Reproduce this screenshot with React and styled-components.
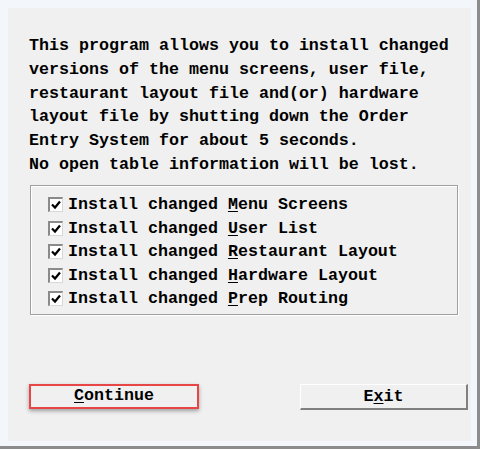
import React from 'react'
import styled, { createGlobalStyle } from 'styled-components'

const GlobalStyle = createGlobalStyle`
  html, body {
    margin: 0;
    padding: 0;
    background: #f3f6fb;
  }
  * { box-sizing: border-box; }
`

const items = [
  { key: 'M', rest: 'enu Screens' },
  { key: 'U', rest: 'ser List' },
  { key: 'R', rest: 'estaurant Layout' },
  { key: 'H', rest: 'ardware Layout' },
  { key: 'P', rest: 'rep Routing' },
]

function Check() {
  return (
    <Box>
      <svg width="10" height="10" viewBox="0 0 10 10">
        <path d="M1 4.5 L4 7.5 L9 1.5" stroke="#000" strokeWidth="2.2" fill="none" />
      </svg>
    </Box>
  )
}

function App() {
  return (
    <>
      <GlobalStyle />
      <Frame>
        <Panel>
          <Message>
            This program allows you to install changed{'\n'}
            versions of the menu screens, user file,{'\n'}
            restaurant layout file and(or) hardware{'\n'}
            layout file by shutting down the Order{'\n'}
            Entry System for about 5 seconds.{'\n'}
            No open table information will be lost.
          </Message>
          <Group>
            {items.map(it => (
              <Row key={it.key}>
                <Check />
                <span>Install changed <u>{it.key}</u>{it.rest}</span>
              </Row>
            ))}
          </Group>
          <Buttons>
            <Focus>
              <Btn><u>C</u>ontinue</Btn>
            </Focus>
            <ExitBtn>E<u>x</u>it</ExitBtn>
          </Buttons>
        </Panel>
      </Frame>
    </>
  )
}

export default App

const Frame = styled.div`
width: 480px;
height: 449px;
padding: 8px 0 0 8px;
border-right: 3px solid #8c8c8c;
border-bottom: 3px solid #8c8c8c;
background: #f3f6fb;
`
const Panel = styled.div`
width: 463px;
height: 433px;
background: #f0f0f0;
display: flex;
flex-direction: column;
padding: 26px 0 31px 21px;
font-family: "Liberation Mono", "DejaVu Sans Mono", monospace;
font-weight: bold;
font-size: 16.67px;
color: #000;
`
const Message = styled.div`
white-space: pre-line;
line-height: 23.8px;
`
const Group = styled.div`
margin: 8px 0 0 1px;
width: 428px;
height: 130px;
border: 1px solid #a0a0a0;
box-shadow: 1px 1px 0 #fff, inset 1px 1px 0 #fff;
padding: 7px 0 0 17px;
display: flex;
flex-direction: column;
`
const Row = styled.div`
display: flex;
align-items: center;
height: 23.6px;
gap: 5px;
u { text-underline-offset: 2px; }
`
const Box = styled.span`
width: 15px;
height: 15px;
flex: none;
display: flex;
align-items: center;
justify-content: center;
background: #fff;
border-top: 2px solid #8a8a8a;
border-left: 2px solid #8a8a8a;
border-bottom: 1px solid #d8d8d8;
border-right: 1px solid #d8d8d8;
`
const Buttons = styled.div`
margin-top: auto;
display: flex;
justify-content: space-between;
align-items: flex-start;
padding-right: 3px;
`
const Focus = styled.div`
width: 170px;
height: 25px;
border: 2px solid #e84646;
box-shadow: 0 2px 4px rgba(0, 0, 0, 0.35);
background: #f0f0f0;
`
const Btn = styled.div`
height: 100%;
display: flex;
align-items: center;
justify-content: center;
line-height: 1;
padding-bottom: 1px;
u { text-underline-offset: 2px; }
`
const ExitBtn = styled.div`
width: 168px;
height: 26px;
display: flex;
align-items: center;
justify-content: center;
background: #f0f0f0;
border-top: 1px solid #fff;
border-left: 1px solid #fff;
border-right: 2px solid #808080;
border-bottom: 2px solid #808080;
u { text-underline-offset: 2px; }
`
